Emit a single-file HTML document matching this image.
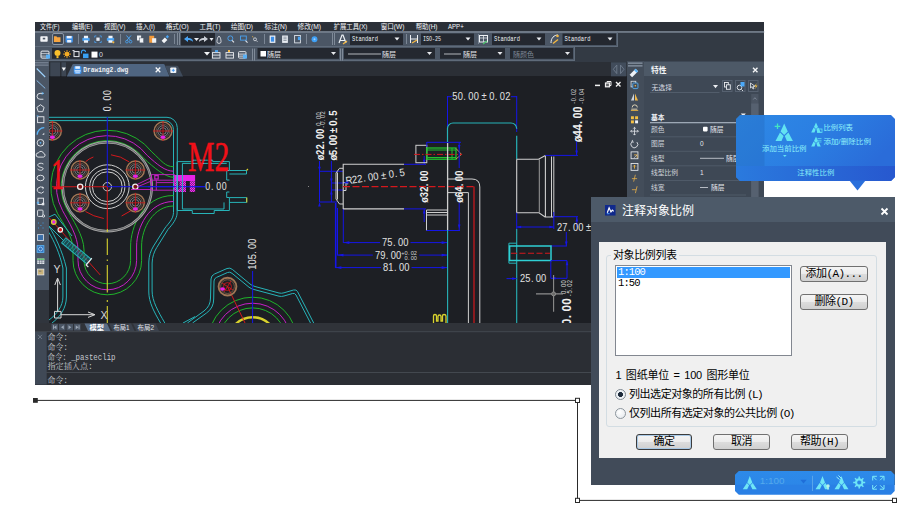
<!DOCTYPE html>
<html lang="zh-CN">
<head>
<meta charset="utf-8">
<title>注释对象比例</title>
<style>
html,body{margin:0;padding:0;background:#fff;}
body{width:921px;height:528px;position:relative;overflow:hidden;font-family:"Liberation Sans","Noto Sans CJK SC",sans-serif;}
.abs{position:absolute;}
#win{position:absolute;left:35px;top:22px;width:729.200px;height:362.600px;background:#333a44;overflow:hidden;}
#menubar{position:absolute;left:0;top:0;width:730px;height:8.500px;background:#2b3038;color:#e8eaee;font-size:7px;line-height:9px;white-space:nowrap;}
#menubar span{position:absolute;top:0;}
#tb1{position:absolute;left:0;top:10px;width:583px;height:14px;background:#4b5665;}
#tb2{position:absolute;left:0;top:24px;width:539px;height:14px;background:#4b5665;}
.combo{position:absolute;height:11px;background:#23272e;color:#e4e6ea;font-size:6px;line-height:11px;white-space:nowrap;}
.combo i{position:absolute;right:3px;top:4px;width:0;height:0;border-left:2.5px solid transparent;border-right:2.5px solid transparent;border-top:3px solid #e8eaee;}
.sep{position:absolute;width:1px;background:#7a8593;}
.grip{position:absolute;width:2px;border-left:1px solid #808a98;border-right:1px solid #808a98;}
#tabbar{position:absolute;left:14px;top:40px;width:578px;height:14.500px;background:#2b2f36;}
#ltool{position:absolute;left:0;top:39px;width:14px;height:229px;background:#4b5665;}
#lbelow{position:absolute;left:0;top:268px;width:14px;height:40px;background:#30353d;}
#canvas{position:absolute;left:14px;top:54px;width:578px;height:247px;background:#1d1f24;overflow:hidden;}
#laytabs{position:absolute;left:0;top:301px;width:592px;height:9px;background:#303339;}
#cmd{position:absolute;left:0;top:310px;width:592px;height:53px;background:#2b2e34;}
#rstrip{position:absolute;left:592px;top:39px;width:17px;height:323px;background:#434d5a;}
#props{position:absolute;left:609px;top:39px;width:121px;height:323px;background:#3e4855;}
#props .hd{position:absolute;left:0;top:.500px;width:121px;height:14.500px;background:#4d5967;}
.ptxt{position:absolute;color:#e2e5ea;font-size:7px;line-height:9px;white-space:nowrap;}
.prow{position:absolute;left:5px;width:100px;height:1px;background:#4d5764;}
#dlg{position:absolute;left:591px;top:196.700px;width:303.700px;height:288.200px;background:#414b59;}
#dlg .tt{position:absolute;left:0;top:0;width:304px;height:25px;background:#4d5a69;}
#dlg .pn{position:absolute;left:8px;top:45px;width:287.300px;height:216px;background:#f0f0f0;}
.btn{position:absolute;height:14px;border:1px solid #707070;border-radius:3px;background:linear-gradient(#f4f4f4 0%,#ececec 48%,#dcdcdc 52%,#d0d0d0 100%);color:#000;font-size:11px;line-height:15px;text-align:center;white-space:nowrap;box-sizing:content-box;font-family:"Liberation Mono","Noto Sans CJK SC",monospace;letter-spacing:-.6px;}
.dt{position:absolute;color:#000;font-size:11px;line-height:13px;white-space:nowrap;}
</style>
</head>
<body>
<!-- ================= MAIN WINDOW ================= -->
<div id="win">
  <div id="menubar"></div>
  <div id="tb1"></div>
  <div id="tb2"></div>
  <div id="ltool"></div>
  <div id="lbelow"></div>
  <div id="tabbar"></div>
  <div id="canvas"><!--CANVAS--></div>
  <div id="laytabs"></div>
  <div id="cmd"></div>
  <div id="rstrip"></div>
  <div id="props"><div class="hd"></div></div>
</div>

<!-- ================= TOOLBAR ICONS (page coords) ================= -->
<svg class="abs" style="left:0;top:0" width="921" height="528" viewBox="0 0 921 528" font-family="'Liberation Mono','Noto Sans CJK SC',monospace">
  <!-- borders / lines -->
  <rect x="35" y="31.200" width="729.200" height="1.500" fill="#7d8896"/>
  <rect x="35" y="46" width="583" height="1" fill="#5f6b7a"/>
  <rect x="617" y="32" width="1" height="15" fill="#5f6b7a"/>
  <rect x="574" y="47" width="1" height="13" fill="#5f6b7a"/>
  <rect x="35" y="59.800" width="540" height="1.200" fill="#5f6b7a"/>
  <!-- toolbar 1 icons -->
  <g>
    <g transform="translate(44 39) scale(.82) translate(-44.5 -38.5)"><rect x="40" y="35" width="9" height="7" rx="1" fill="#f2f4f7"/><rect x="43" y="37" width="3" height="2" fill="#4b5665"/></g>
    <rect x="52.5" y="33.500" width="11" height="11" rx="1.5" fill="#3c4552" stroke="#8c97a6" stroke-width="1"/>
    <g transform="translate(57.2 39.2) scale(.82) translate(-58 -39.5)"><path d="M54 36h3l1 1h4v6h-8z" fill="#f7a540"/></g>
    <g transform="translate(69.2 39.2) scale(.82) translate(-70 -39)"><rect x="65.500" y="35" width="9" height="8" rx="1" fill="#3b8ee8"/><rect x="67" y="35" width="6" height="3" fill="#e9f2ff"/><rect x="67.500" y="40" width="5" height="3" fill="#e9f2ff"/></g>
    <rect x="78" y="34" width="1" height="10" fill="#7b8695"/>
    <g transform="translate(86 39.2) scale(.82) translate(-86 -38.7)"><rect x="81.500" y="37" width="9" height="4" rx="1" fill="#49a0f0"/><rect x="83.500" y="34.500" width="5" height="3" fill="#eef4fb"/><rect x="83.500" y="40" width="5" height="3" fill="#eef4fb"/></g>
    <g transform="translate(98 39.2) scale(.82) translate(-98 -39)"><path d="M94 35h2M94 35v2M102 35h-2M102 35v2M94 43h2M94 43v-2M102 43h-2M102 43v-2" stroke="#49a0f0" stroke-width="1" fill="none"/><rect x="96" y="37" width="4" height="4" fill="#e8eef6"/></g>
    <g transform="translate(110.5 39.2) scale(.82) translate(-110.5 -38.7)"><rect x="106" y="37" width="9" height="4" rx="1" fill="#49a0f0"/><rect x="108" y="34.500" width="5" height="3" fill="#eef4fb"/><rect x="108" y="40" width="5" height="3" fill="#eef4fb"/><circle cx="114" cy="42.500" r="1.300" fill="#f5b841"/></g>
    <rect x="120" y="34" width="1" height="10" fill="#7b8695"/>
    <g transform="translate(128.7 39.2) scale(.82) translate(-128.7 -39)"><path d="M126 34.500l5 6M131.500 34.500l-5 6" stroke="#4aa3f2" stroke-width="1.200" fill="none"/><circle cx="126.500" cy="42" r="1.600" fill="none" stroke="#4aa3f2"/><circle cx="131" cy="42" r="1.600" fill="none" stroke="#4aa3f2"/></g>
    <g transform="translate(140.3 39.2) scale(.82) translate(-140.5 -39)"><rect x="136.500" y="34.500" width="5" height="6" fill="#f0f3f7"/><rect x="139.500" y="37.500" width="5" height="6" fill="#f0f3f7" stroke="#4b5665" stroke-width=".6"/></g>
    <g transform="translate(152.7 39.2) scale(.82) translate(-152.7 -39.2)"><rect x="148.500" y="35" width="6" height="8.500" fill="#f39a3a"/><rect x="152" y="38" width="5" height="5.500" fill="#f0f3f7"/></g>
    <g transform="translate(165.3 39.2) scale(.82) translate(-165.5 -39)"><path d="M161 41l4-4 3 3-4 4z" fill="#f3f5f8"/><path d="M166 36l2-2 2 2-2 2z" fill="#4aa3f2"/></g>
    <rect x="174" y="34" width="1" height="10" fill="#7b8695"/>
    <rect x="177" y="33" width="1" height="12" fill="#7f8a98"/><rect x="179" y="33" width="1" height="12" fill="#7f8a98"/>
    <rect x="181" y="33" width="34" height="12.500" fill="#242830"/>
    <path d="M184 39l4-3v2c3 0 5 1 5 4-1-1.600-3-2-5-2v2z" fill="#4aa3f2"/>
    <path d="M194 38h5l-2.500 3z" fill="#e8ebf0"/>
    <path d="M207 39l-4-3v2c-3 0-5 1-5 4 1-1.600 3-2 5-2v2z" fill="#c9ced6" transform="translate(1 0)"/>
    <path d="M209.500 38h4l-2 3z" fill="#e8ebf0"/>
    <g transform="translate(219 39.3) scale(.82) translate(-219 -39)"><path d="M216.500 42c0-3 1-6 2.500-7 1.500 1 2.500 4 2.500 7a2.500 2 0 0 1-5 0z" fill="none" stroke="#e6e9ee" stroke-width="1"/></g>
    <g transform="translate(231.3 39.3) scale(.82) translate(-231.2 -39.2)"><circle cx="230" cy="38" r="3" fill="none" stroke="#4aa3f2" stroke-width="1.100"/><path d="M232 40.500l2.500 2.500" stroke="#e6e9ee" stroke-width="1.300"/></g>
    <g transform="translate(244 39.3) scale(.82) translate(-244.2 -39)"><rect x="240" y="35" width="7" height="5" fill="none" stroke="#4aa3f2" stroke-width="1.100"/><path d="M246 40.500l2.500 2.500" stroke="#e6e9ee" stroke-width="1.300"/></g>
    <g transform="translate(255 39.3) scale(.82) translate(-254.5 -39.5)"><circle cx="254.500" cy="39.500" r="1.800" fill="none" stroke="#e6e9ee" stroke-width=".9"/><path d="M256 41l1.500 1.500" stroke="#e6e9ee"/><path d="M251 36l1.500 1" stroke="#f5b841"/></g>
    <rect x="264" y="34" width="1" height="10" fill="#7b8695"/>
    <g transform="translate(272.5 39.2) scale(.82) translate(-272.5 -39)"><rect x="269" y="34.500" width="7" height="9" fill="#e9edf3"/><rect x="270.500" y="36" width="4" height="6" fill="#3b8ee8"/></g>
    <g transform="translate(285 39.2) scale(.82) translate(-285 -39)"><rect x="281.500" y="34.500" width="7" height="9" fill="#e9edf3"/><path d="M283 36.500h4M283 38.500h4M283 40.500h4" stroke="#5a6675" stroke-width=".8"/></g>
    <g transform="translate(297.5 39.2) scale(.82) translate(-297.5 -39)"><rect x="294" y="34.500" width="7" height="9" fill="none" stroke="#e9edf3" stroke-width="1"/><rect x="298" y="36" width="3" height="4" fill="#4aa3f2"/></g>
    <rect x="306" y="34" width="1" height="10" fill="#7b8695"/>
    <g transform="translate(314.5 39.2) scale(.82) translate(-314.5 -39)"><circle cx="314.500" cy="39" r="3.600" fill="#3fa0f5"/><circle cx="314.500" cy="39" r="1.200" fill="#9fd0ff"/></g>
    <rect x="332" y="33" width="1" height="12" fill="#7f8a98"/><rect x="334" y="33" width="1" height="12" fill="#7f8a98"/>
    <path d="M339 43l3-8h1l3 8M340.200 40.500h4.600" stroke="#eef1f5" stroke-width="1.200" fill="none"/><path d="M343 44l4-3" stroke="#f5b841" stroke-width="1.300"/>
    <rect x="406" y="34" width="1" height="10" fill="#7b8695"/>
    <path d="M410.500 35v8M417.500 35v8M410.500 39h7" stroke="#eef1f5" stroke-width="1" fill="none"/><path d="M412 43l5-3" stroke="#f5b841" stroke-width="1.300"/>
    <rect x="478" y="34" width="1" height="10" fill="#7b8695"/>
    <rect x="479.500" y="35.500" width="8" height="6.500" fill="none" stroke="#eef1f5" stroke-width="1"/><path d="M479.500 38h8M483.500 35.500v6.500" stroke="#eef1f5" stroke-width=".7"/><path d="M483 44l4-3" stroke="#49c16a" stroke-width="1.300"/>
    <path d="M551 43c0-5 3-8 7-8" stroke="#eef1f5" stroke-width="1" fill="none"/><path d="M553 43.500l5-4" stroke="#f5b841" stroke-width="1.400"/><circle cx="557.500" cy="36" r="1.300" fill="#f5b841"/>
  </g>
  <!-- combos row 1 -->
  <g font-size="6.300" fill="#eef0f4">
    <rect x="350" y="33.500" width="53" height="11.500" fill="#242830"/><text x="352" y="41.200" textLength="26" lengthAdjust="spacingAndGlyphs">Standard</text><path d="M394.500 37.500h5l-2.500 3z"/>
    <rect x="421" y="33.500" width="53" height="11.500" fill="#242830"/><text x="423" y="41.200" textLength="18" lengthAdjust="spacingAndGlyphs">ISO-25</text><path d="M465.500 37.500h5l-2.500 3z"/>
    <rect x="492" y="33.500" width="53" height="11.500" fill="#242830"/><text x="494" y="41.200" textLength="26" lengthAdjust="spacingAndGlyphs">Standard</text><path d="M536.500 37.500h5l-2.500 3z"/>
    <rect x="562.500" y="33.500" width="53.500" height="11.500" fill="#242830"/><text x="564.500" y="41.200" textLength="26" lengthAdjust="spacingAndGlyphs">Standard</text><path d="M607.500 37.500h5l-2.500 3z"/>
  </g>
  <!-- toolbar 2 -->
  <g transform="translate(0 .600)">
    <rect x="41" y="50.500" width="8" height="7" rx="1" fill="none" stroke="#e8ebf0" stroke-width="1"/><path d="M41 53h8M41 55.500h8" stroke="#e8ebf0" stroke-width=".7"/><rect x="46" y="54" width="4" height="4" fill="#5ab0f5"/>
    <rect x="52" y="47.400" width="159.500" height="10.800" fill="#242830"/>
    <circle cx="57.500" cy="52.500" r="3" fill="#f8bf2c"/><rect x="56.500" y="55.500" width="2" height="2" fill="#f8bf2c"/>
    <circle cx="67" cy="53.500" r="2.200" fill="#f8bf2c"/><path d="M67 49.500v8M63 53.500h8M64.200 50.700l5.600 5.600M69.800 50.700l-5.600 5.600" stroke="#f5a623" stroke-width=".9"/>
    <rect x="74" y="51" width="5" height="5" fill="none" stroke="#e8ebf0" stroke-width="1"/><path d="M72.500 50h2" stroke="#e8ebf0"/>
    <rect x="83" y="53" width="5.500" height="4.500" fill="#39a1f4"/><path d="M81.500 53v-1.500a2 2 0 0 1 4 0" stroke="#39a1f4" stroke-width="1.100" fill="none"/>
    <rect x="91.500" y="51" width="6" height="6" fill="#fff"/>
    <text x="99" y="56" font-size="7" fill="#d8dce2" font-family="'Liberation Sans',sans-serif">0</text>
    <path d="M204 51.500h6l-3 3.500z" fill="#f2f4f7"/>
    <g fill="none" stroke="#e8ebf0" stroke-width=".9"><rect x="212.500" y="52" width="7.500" height="5.500"/><path d="M212.500 54.500h7.500"/><rect x="226" y="52" width="7.500" height="5.500"/><path d="M226 54.500h7.500"/><rect x="238.500" y="51" width="7.500" height="6.500" rx="1"/><path d="M238.500 53.500h7.500M238.500 55.500h7.500"/></g>
    <path d="M215 49.500h3v2h-3z" fill="#4aa3f2"/><path d="M228 49.500h2v2h-2z" fill="#f5b841"/><rect x="243" y="54" width="4" height="4" fill="#5ab0f5"/>
    <rect x="252" y="48" width="1" height="12" fill="#7f8a98"/><rect x="254" y="48" width="1" height="12" fill="#7f8a98"/>
    <rect x="340" y="48" width="1" height="12" fill="#7f8a98"/><rect x="342" y="48" width="1" height="12" fill="#7f8a98"/>
  </g>
  <g font-size="7" fill="#e6e8ec" font-family="'Liberation Sans','Noto Sans CJK SC',sans-serif">
    <rect x="257.500" y="48" width="81.500" height="10.800" fill="#242830"/><rect x="260.500" y="51" width="5.500" height="5.500" fill="#fff"/><text x="267" y="56.500">随层</text><path d="M331 52h5l-2.500 3z"/>
    <rect x="344" y="48" width="91" height="10.800" fill="#242830"/><path d="M348 54h33" stroke="#d8dbe0" stroke-width=".8"/><text x="382" y="56.500">随层</text><path d="M427 52h5l-2.500 3z"/>
    <rect x="440" y="48" width="65" height="10.800" fill="#242830"/><path d="M444 54h17" stroke="#d8dbe0" stroke-width=".8"/><text x="463" y="56.500">随层</text><path d="M497.500 52h5l-2.500 3z"/>
    <rect x="510" y="48" width="63" height="10.800" fill="#242830"/><text x="513" y="56.500" fill="#7f8996">随颜色</text><path d="M565 52h5l-2.500 3z"/>
  </g>
</svg>
<!-- ================= CAD CANVAS (page coords) ================= -->
<svg class="abs" style="left:49px;top:76px" width="578" height="247" viewBox="49 76 578 247" fill="none" stroke-linecap="butt" font-family="'Liberation Serif','Noto Serif CJK SC',serif">
<path d="M49 117.3H167A10.3 10.3 0 0 1 177.3 127.6V161.5" stroke="#27b3b8" stroke-width="1" />
<path d="M49 120.6H164.5A9 9 0 0 1 173.5 129.6V212.500C173.500 219 168 224 165 228L153.600 246C150.500 251 149 256 148.800 262V292C148.800 302 154 312 160.600 323" stroke="#27b3b8" stroke-width="1" />
<path d="M177.100 210.500V213C177 219 172 225 168 229.400L156.700 247.600C154 252 152.300 257 152.100 263V291C152.100 301 158 311 164.800 323" stroke="#27b3b8" stroke-width="1" />
<path d="M49 226.4C55 236 62 250 66.4 268V297C66.4 308 60 317 52 323" stroke="#27b3b8" stroke-width="1" />
<path d="M49 232.5C54 241 60 254 62.9 268V297C62.9 306 57 314 49 320" stroke="#27b3b8" stroke-width="1" />
<path d="M195 316.6L183 323" stroke="#27b3b8" stroke-width="1" />
<path d="M173.5 166.7C165 166.7 161.8 160.9 151.8 151.9A56.5 56.5 0 0 0 57.4 213.2C63.4 224.2 73 236 73 250V260.5A34.3 34.3 0 0 0 141.6 260.5V246C141.6 228 153.6 206 173.5 206" stroke="#1fb32a" stroke-width="1" />
<path d="M173.5 171.2C165 171.2 157.3 164.5 147.3 155.5A50.7 50.7 0 0 0 62.5 210.5C68.5 221.5 78 236 78 250V260.5A29.3 29.3 0 0 0 136.6 260.5V246C136.6 228 148.6 201.5 173.5 201.5" stroke="#c61fc6" stroke-width="1" />
<path d="M173.5 177.3C165 177.3 153.7 167.3 143.7 158.3A46.2 46.2 0 0 0 66.5 208.4C72.5 219.4 84 236 84 250V260.5A23.3 23.3 0 0 0 130.6 260.5V246C130.6 228 142.6 195.5 173.5 195.5" stroke="#1fb32a" stroke-width="1" />
<circle cx="107.3" cy="186.7" r="44.5" stroke="#a8a8a8" stroke-width="2.4" fill="none"/>
<circle cx="107.3" cy="186.7" r="44.5" stroke="#1d1f24" stroke-width="0.5" fill="none"/>
<circle cx="107.3" cy="186.7" r="21.9" stroke="#cfcfcf" stroke-width="1" fill="none"/>
<circle cx="107.3" cy="186.7" r="17.6" stroke="#cfcfcf" stroke-width="1" fill="none"/>
<circle cx="107.3" cy="186.7" r="14.9" stroke="#cfcfcf" stroke-width="1" fill="none"/>
<circle cx="107.3" cy="186.7" r="4.2" stroke="#cfcfcf" stroke-width="1" fill="none"/>
<path d="M93.4 157Q89 158.500 85.500 161.800" stroke="#d4181c" stroke-width="1" />
<path d="M111 154.800Q121 156 129 161.800" stroke="#d4181c" stroke-width="1" />
<path d="M85.500 211.500Q93 216.500 103.800 218.500" stroke="#d4181c" stroke-width="1" />
<path d="M132.500 209.800L121.600 216" stroke="#d4181c" stroke-width="1" />
<circle cx="80" cy="170" r="8.9" stroke="#a07655" stroke-width="1.5" fill="none"/>
<circle cx="80" cy="170" r="6.9" stroke="#7b5f49" stroke-width="0.7" fill="none"/>
<circle cx="80" cy="170" r="5.3" stroke="#a4a4a4" stroke-width="0.7" fill="none"/>
<circle cx="80" cy="170" r="3.3" stroke="#a4a4a4" stroke-width="0.7" fill="none"/>
<path d="M70 170L90 170" stroke="#c81a1e" stroke-width="0.9" />
<path d="M80 160L80 180" stroke="#c81a1e" stroke-width="0.9" />
<ellipse cx="80" cy="176.2" rx="2.6" ry="1.8" fill="#e522e5" stroke="none"/>
<circle cx="135.4" cy="170" r="8.9" stroke="#a07655" stroke-width="1.5" fill="none"/>
<circle cx="135.4" cy="170" r="6.9" stroke="#7b5f49" stroke-width="0.7" fill="none"/>
<circle cx="135.4" cy="170" r="5.3" stroke="#a4a4a4" stroke-width="0.7" fill="none"/>
<circle cx="135.4" cy="170" r="3.3" stroke="#a4a4a4" stroke-width="0.7" fill="none"/>
<path d="M125.4 170L145.4 170" stroke="#c81a1e" stroke-width="0.9" />
<path d="M135.4 160L135.4 180" stroke="#c81a1e" stroke-width="0.9" />
<ellipse cx="135.4" cy="176.2" rx="2.6" ry="1.8" fill="#e522e5" stroke="none"/>
<circle cx="80" cy="202.8" r="8.9" stroke="#a07655" stroke-width="1.5" fill="none"/>
<circle cx="80" cy="202.8" r="6.9" stroke="#7b5f49" stroke-width="0.7" fill="none"/>
<circle cx="80" cy="202.8" r="5.3" stroke="#a4a4a4" stroke-width="0.7" fill="none"/>
<circle cx="80" cy="202.8" r="3.3" stroke="#a4a4a4" stroke-width="0.7" fill="none"/>
<path d="M70 202.8L90 202.8" stroke="#c81a1e" stroke-width="0.9" />
<path d="M80 192.8L80 212.8" stroke="#c81a1e" stroke-width="0.9" />
<ellipse cx="80" cy="209" rx="2.6" ry="1.8" fill="#e522e5" stroke="none"/>
<circle cx="135.4" cy="202.8" r="8.9" stroke="#a07655" stroke-width="1.5" fill="none"/>
<circle cx="135.4" cy="202.8" r="6.9" stroke="#7b5f49" stroke-width="0.7" fill="none"/>
<circle cx="135.4" cy="202.8" r="5.3" stroke="#a4a4a4" stroke-width="0.7" fill="none"/>
<circle cx="135.4" cy="202.8" r="3.3" stroke="#a4a4a4" stroke-width="0.7" fill="none"/>
<path d="M125.4 202.8L145.4 202.8" stroke="#c81a1e" stroke-width="0.9" />
<path d="M135.4 192.8L135.4 212.8" stroke="#c81a1e" stroke-width="0.9" />
<ellipse cx="135.4" cy="209" rx="2.6" ry="1.8" fill="#e522e5" stroke="none"/>
<circle cx="52.4" cy="131" r="8.9" stroke="#a07655" stroke-width="1.5" fill="none"/>
<circle cx="52.4" cy="131" r="6.9" stroke="#7b5f49" stroke-width="0.7" fill="none"/>
<circle cx="52.4" cy="131" r="5.3" stroke="#a4a4a4" stroke-width="0.7" fill="none"/>
<circle cx="52.4" cy="131" r="3.3" stroke="#a4a4a4" stroke-width="0.7" fill="none"/>
<path d="M42.4 131L62.4 131" stroke="#c81a1e" stroke-width="0.9" />
<path d="M52.4 121L52.4 141" stroke="#c81a1e" stroke-width="0.9" />
<ellipse cx="52.4" cy="137.2" rx="2.6" ry="1.8" fill="#e522e5" stroke="none"/>
<circle cx="163" cy="131" r="8.9" stroke="#a07655" stroke-width="1.5" fill="none"/>
<circle cx="163" cy="131" r="6.9" stroke="#7b5f49" stroke-width="0.7" fill="none"/>
<circle cx="163" cy="131" r="5.3" stroke="#a4a4a4" stroke-width="0.7" fill="none"/>
<circle cx="163" cy="131" r="3.3" stroke="#a4a4a4" stroke-width="0.7" fill="none"/>
<path d="M153 131L173 131" stroke="#c81a1e" stroke-width="0.9" />
<path d="M163 121L163 141" stroke="#c81a1e" stroke-width="0.9" />
<ellipse cx="163" cy="137.2" rx="2.6" ry="1.8" fill="#e522e5" stroke="none"/>
<path d="M107.3 117L107.3 186.7" stroke="#1515e8" stroke-width="1" />
<path d="M107.3 186.7L107.3 229" stroke="#d4181c" stroke-width="1.1" />
<path d="M107.300 229V232M107.300 238.500V255M107.300 259.500V261M107.300 265V292.500M107.300 300V302M107.300 306V323" stroke="#d8d22e" stroke-width="1.1" />
<path d="M52 186.7L107.3 186.7" stroke="#d4181c" stroke-width="1.1" />
<path d="M107.3 186.7L205 186.7" stroke="#1515e8" stroke-width="1" />
<circle cx="80.2" cy="186.7" r="2.6" stroke="#f0f0f0" stroke-width="1.3" fill="#7a1515"/>
<circle cx="135.3" cy="186.7" r="2.6" stroke="#f0f0f0" stroke-width="1.3" fill="#7a1515"/>
<path d="M151.400 174.600H174.500V190.200H151.400zM151.400 180.200H174.500M156.300 182.600H174.500M156.300 180.200V190.200" stroke="#c61fc6" stroke-width="0.9" />
<path d="M137 184.500L151.400 177.500M137 187L151.400 181" stroke="#c61fc6" stroke-width="0.9" />
<path d="M131 189.500H151.400" stroke="#c61fc6" stroke-width="0.9" />
<rect x="154.800" y="175.600" width="3.400" height="3.400" stroke="#c61fc6" stroke-width="1.200"/>
<defs><pattern id="mgp" width="2" height="2" patternUnits="userSpaceOnUse"><rect width="2" height="2" fill="#e21fe2" fill-opacity=".55"/><rect width="1" height="1" fill="#f02ff0"/><rect x="1" y="1" width="1" height="1" fill="#f02ff0"/></pattern></defs>
<rect x="174.600" y="175" width="20.500" height="6.300" fill="#e622e6" stroke="none"/>
<rect x="174.600" y="181.300" width="20.500" height="10.700" fill="url(#mgp)" stroke="none"/>
<rect x="186" y="181" width="3.800" height="11.300" fill="#1d1f24" stroke="none"/>
<rect x="177.200" y="181.500" width="2.400" height="7.800" fill="#1d1f24" stroke="none" opacity=".75"/>
<path d="M148 186.7L205 186.7" stroke="#1515e8" stroke-width="1" />
<path d="M177.300 161.600H192.700V160.200H212.700V161.600H229.400V170.500H226.700V180H229.400M229.400 192H226.700V197.500H229.400V210.500H214.200V213.500H192.300V210.500H177.100" stroke="#27b3b8" stroke-width="1" />
<path d="M182.400 163.400H226.700M182.400 163.400V209H224V202.400" stroke="#27b3b8" stroke-width="1" />
<path d="M177.200 161.600V210.500" stroke="#2fc3c9" stroke-width="1.4" />
<path d="M229.400 170.500H246.500V174H229.400M229.400 197.600H246.500V202.400H229.400" stroke="#27b3b8" stroke-width="1" />
<path d="M246.500 170.500l1.500-1.500M246.800 197.600v4.800" stroke="#d8d22e" stroke-width="1.1" />
<path d="M49 217L55 214.200L72 236M49 226L64 241" stroke="#27b3b8" stroke-width="1" />
<path d="M49 217.5L100.3 275" stroke="#d4181c" stroke-width="1" />
<circle cx="53.8" cy="222" r="2.3" stroke="#d8d22e" stroke-width="1.2" fill="#e522e5"/>
<circle cx="60.3" cy="229.8" r="2.3" stroke="#f0f0f0" stroke-width="1.1" fill="#e0141a"/>
<g transform="rotate(40 64 240)"><rect x="64" y="237.200" width="33" height="6.500" stroke="#27b3b8" fill="#1b6f78" fill-opacity=".55"/><path d="M66 237v7M69 237v7M72 237v7M75 237v7M78 237v7M81 237v7M84 237v7M87 237v7M90 237v7M93 237v7" stroke="#27b3b8" stroke-width=".6"/><path d="M97 236v9h3" stroke="#e8e8e8" stroke-width="1.200"/></g>
<text x="0" y="0" font-size="43.500" fill="#f01018" stroke="#f01018" stroke-width=".7" transform="translate(51.300 189.400) scale(.6 1)">1</text>
<text x="0" y="0" font-size="42.500" fill="#f01018" stroke="#f01018" stroke-width=".5" transform="translate(188 170.600) scale(.70 1)">M2</text>
<text x="0.3 6.7 12.8 19.1" y="0" font-size="10" fill="#e2e2e2" stroke="none" font-family="'Liberation Sans','Noto Sans CJK SC',sans-serif" transform="translate(205 190) scale(0.88 1)">0.00</text>
<text x="0.3 6.6 12.7 18.9" y="0" font-size="10" fill="#e2e2e2" stroke="none" font-family="'Liberation Sans','Noto Sans CJK SC',sans-serif" transform="translate(110.8 111.6) rotate(-90) scale(0.88 1)">0.00</text>
<path d="M57.600 311.400V279M54.500 311.400H61V318H54.500zM61 314.700H94" stroke="#d8d8d8" stroke-width="1" />
<path d="M54.800 285L57.600 278L60.400 285M88 312L95 314.700L88 317.400" stroke="#d8d8d8" stroke-width="1" />
<text x="53.5" y="272.5" font-size="10.5" fill="#d8d8d8" stroke="none" font-family="'Liberation Sans',sans-serif" >Y</text>
<text x="100.5" y="318.5" font-size="10.5" fill="#d8d8d8" stroke="none" font-family="'Liberation Sans',sans-serif" >X</text>
<path d="M187.400 323L204 311Q210.500 306 210.500 298L211 279Q211.200 275.500 214.500 274L227 268.500Q230 267.300 232.500 269.500L250 284Q252 285.700 255 286.500L279 293Q281.500 293.600 284 292.800L293.500 290Q296.300 289.200 297.600 291.700L313.700 323" stroke="#27b3b8" stroke-width="1" />
<path d="M192.500 323L206.500 313Q213.700 308 213.700 299L214 281Q214 278.500 216.500 277.400L227.500 272.500Q229.800 271.500 232 273.300L249 287.200Q251 288.700 254 289.500L279 296.200Q281.500 296.800 284 296L292.500 293.500Q294.800 292.800 296 295L310.500 323" stroke="#27b3b8" stroke-width="1" />
<circle cx="252.6" cy="341.5" r="44.3" stroke="#1fb32a" stroke-width="1" fill="none"/>
<circle cx="252.6" cy="341.5" r="38.3" stroke="#c61fc6" stroke-width="1" fill="none"/>
<circle cx="252.6" cy="341.5" r="33.6" stroke="#1fb32a" stroke-width="1" fill="none"/>
<circle cx="252.6" cy="341.5" r="24.3" stroke="#d8d22e" stroke-width="2.4" fill="none"/>
<path d="M227.5 286.6L245 323" stroke="#d4181c" stroke-width="1" />
<circle cx="227.5" cy="286.6" r="8.9" stroke="#a07655" stroke-width="1.9" fill="none"/>
<circle cx="227.5" cy="286.6" r="6.9" stroke="#84644b" stroke-width="0.8" fill="none"/>
<circle cx="227.5" cy="286.6" r="4" stroke="#d4181c" stroke-width="0.8" fill="none"/>
<path d="M222 283L233 290M231 281L224 292" stroke="#d4181c" stroke-width="0.9" />
<ellipse cx="222.500" cy="289" rx="2.400" ry="1.800" fill="#e522e5" stroke="none"/>
<path d="M252.6 271L252.6 323" stroke="#1515e8" stroke-width="1" />
<text x="0 6.5 13 19.9 25.9 32.3" y="0" font-size="11.5" fill="#e2e2e2" stroke="none" font-family="'Liberation Sans','Noto Sans CJK SC',sans-serif" transform="translate(256 269.7) rotate(-90) scale(0.8 1)">105.00</text>
<text x="-0.2 6.1 12.1 18.4 24 29.9" y="0" font-size="10.3" fill="#f0f0f0" stroke="none" font-family="'Liberation Sans','Noto Sans CJK SC',sans-serif" transform="translate(324.2 160) rotate(-90) scale(0.88 1)" font-weight="bold">ø22.00</text>
<text x="0.2 4.3 7.9 11.8" y="0" font-size="6.4" fill="#d6d6d6" stroke="none" font-family="'Liberation Sans','Noto Sans CJK SC',sans-serif" transform="translate(320.6 126) rotate(-90) scale(0.9 1)">0.00</text>
<text x="0.9 4.1 8.2 11.8 15.7" y="0" font-size="6.4" fill="#d6d6d6" stroke="none" font-family="'Liberation Sans','Noto Sans CJK SC',sans-serif" transform="translate(325.4 128.5) rotate(-90) scale(0.9 1)">-0.02</text>
<text x="-0.5 5.5 11.8 16.9 22.6 30.8 39 45.3 50.4" y="0" font-size="10.8" fill="#f0f0f0" stroke="none" font-family="'Liberation Sans','Noto Sans CJK SC',sans-serif" transform="translate(336.7 160) rotate(-90) scale(0.88 1)" font-weight="bold">ø5.00±0.5</text>
<path d="M319.5 161L319.5 202" stroke="#1515e8" stroke-width="1" />
<path d="M331.4 161L331.4 202" stroke="#1515e8" stroke-width="1" />
<path d="M319.5 171.3L343 171.3" stroke="#1515e8" stroke-width="1" />
<path d="M319.5 202L337 202" stroke="#1515e8" stroke-width="1" />
<path d="M331.4 183L345 183" stroke="#1515e8" stroke-width="1" />
<path d="M331.4 190L343 190" stroke="#1515e8" stroke-width="1" />
<path d="M319.5 171.3L318.2 166.8L320.8 166.8z" fill="#1515e8" stroke="none"/>
<path d="M319.5 202L318.2 206.5L320.8 206.5z" fill="#1515e8" stroke="none"/>
<path d="M331.4 183L330.1 178.5L332.7 178.5z" fill="#1515e8" stroke="none"/>
<path d="M331.4 190L330.1 194.5L332.7 194.5z" fill="#1515e8" stroke="none"/>
<path d="M335.7 203L335.7 268" stroke="#1515e8" stroke-width="1.6" />
<path d="M337.5 208L337.5 255.5" stroke="#1515e8" stroke-width="1" />
<path d="M343.3 209L343.3 243" stroke="#1515e8" stroke-width="1" />
<path d="M343.200 168.300H339.500L336 173V199L339.500 204H343.200M337.500 172.500V199.500M343.200 182.500H346V190.500H343.200" stroke="#cfcfcf" stroke-width="1" />
<path d="M343.200 208.900V164.300H404M343.200 208.900H404" stroke="#cfcfcf" stroke-width="1.1" />
<path d="M404 164.3L426 164.3" stroke="#1515e8" stroke-width="1" />
<path d="M404 208.9L426 208.9" stroke="#1515e8" stroke-width="1" />
<path d="M343 186.6L474 186.6" stroke="#d4181c" stroke-width="1.1" stroke-dasharray="7 2.500"/>
<text x="-0.8 6.2 12.3 18.9 24.6 30.7 39.7 48.5 55.1 60.8" y="0" font-size="10.8" fill="#e2e2e2" stroke="none" font-family="'Liberation Sans','Noto Sans CJK SC',sans-serif" transform="translate(347 184.3) rotate(-8.5) scale(0.88 1)">R22.00±0.5</text>
<path d="M343.5 182.5L348.5 181.3L348.5 183.7z" fill="#1515e8" stroke="none"/>
<text x="-0.2 6.1 12.2 18.6 24.3 30.4" y="0" font-size="10.6" fill="#f0f0f0" stroke="none" font-family="'Liberation Sans','Noto Sans CJK SC',sans-serif" transform="translate(428.3 202.5) rotate(-90) scale(0.88 1)" font-weight="bold">ø32.00</text>
<text x="-0.2 6.1 12.2 18.6 24.3 30.4" y="0" font-size="10.6" fill="#f0f0f0" stroke="none" font-family="'Liberation Sans','Noto Sans CJK SC',sans-serif" transform="translate(462.8 202.5) rotate(-90) scale(0.88 1)" font-weight="bold">ø64.00</text>
<path d="M424.2 156L424.2 164" stroke="#1515e8" stroke-width="1" />
<path d="M424.2 164.3L422.9 159.8L425.5 159.8z" fill="#1515e8" stroke="none"/>
<path d="M424.2 209L424.2 222" stroke="#1515e8" stroke-width="1" />
<path d="M424.2 209L422.9 213.5L425.5 213.5z" fill="#1515e8" stroke="none"/>
<rect x="415.900" y="145.300" width="10.900" height="17.400" stroke="#cfcfcf"/>
<rect x="426.800" y="148" width="29.200" height="11.200" stroke="#22c12e" stroke-width="1.300"/>
<path d="M452 148V159.200M427 150H456M427 157.500H456" stroke="#22c12e" stroke-width="1" />
<path d="M456 148.500L461.500 154.400L456 159" stroke="#c98a5e" stroke-width="1" />
<path d="M414 154.4L462 154.4" stroke="#d4181c" stroke-width="1" stroke-dasharray="6 2 1.500 2"/>
<path d="M426.8 142.3L461 142.3" stroke="#1515e8" stroke-width="1" />
<path d="M426.8 142L426.8 147" stroke="#1515e8" stroke-width="1" />
<path d="M459.2 142.3L459.2 168" stroke="#1515e8" stroke-width="1" />
<path d="M459.2 149.5L457.9 145L460.5 145z" fill="#1515e8" stroke="none"/>
<path d="M459.2 203L459.2 230.5" stroke="#1515e8" stroke-width="1" />
<path d="M459.2 229L457.9 224.5L460.5 224.5z" fill="#1515e8" stroke="none"/>
<path d="M447.6 143L447.6 230" stroke="#cfcfcf" stroke-width="1.3" />
<path d="M426.500 210H447M426.500 212.500H447M426.500 215H447M426.500 210V230.500" stroke="#cfcfcf" stroke-width="1" />
<path d="M426.5 230.5L460 230.5" stroke="#1515e8" stroke-width="1" />
<path d="M447.600 179H472Q479.800 179 479.800 187V323" stroke="#cfcfcf" stroke-width="1" />
<path d="M447.600 192.600H468.400V323" stroke="#cfcfcf" stroke-width="1" />
<path d="M474 186.600V323" stroke="#d4181c" stroke-width="1.2" />
<path d="M447.5 96.7L452 96.7" stroke="#1515e8" stroke-width="1" />
<path d="M511 96.7L516.7 96.7" stroke="#1515e8" stroke-width="1" />
<path d="M447.5 96L447.5 131" stroke="#1515e8" stroke-width="1" />
<path d="M516.7 96L516.7 132" stroke="#1515e8" stroke-width="1" />
<text x="0.1 6.2 12.6 18.3 24.4 33.2 42 48.4 54.1 60.2" y="0" font-size="10.6" fill="#e2e2e2" stroke="none" font-family="'Liberation Sans','Noto Sans CJK SC',sans-serif" transform="translate(452.2 100.3) scale(0.88 1)">50.00±0.02</text>
<path d="M447.500 142V128.500A5.500 5.500 0 0 1 453 123H511A5.700 5.700 0 0 1 516.700 128.700" stroke="#27b3b8" stroke-width="1.2" />
<path d="M516.7 135.7L516.7 159.2" stroke="#27b3b8" stroke-width="1.2" />
<path d="M516.700 159.200H538.500L545.400 155.400M516.700 159.200V212.700H539L545 217H553.800" stroke="#cfcfcf" stroke-width="1.1" />
<path d="M539.300 159.200V212.700" stroke="#9a9a9a" stroke-width="1" />
<path d="M545.400 155.400V217" stroke="#cfcfcf" stroke-width="1.1" />
<path d="M551.500 156.500V217M553.800 156.500V217" stroke="#cfcfcf" stroke-width="1" />
<path d="M545.4 155.4L578 155.4" stroke="#1515e8" stroke-width="1" />
<path d="M576.6 141.5L576.6 155.4" stroke="#1515e8" stroke-width="1" />
<path d="M576.6 155L575.3 150.5L577.9 150.5z" fill="#1515e8" stroke="none"/>
<text x="-0.4 7.1 14.3 22.1 28.7 35.9" y="0" font-size="13.2" fill="#f0f0f0" stroke="none" font-family="'Liberation Sans','Noto Sans CJK SC',sans-serif" transform="translate(582 142) rotate(-90) scale(0.82 1)" font-weight="bold">ø44.00</text>
<text x="0.9 4.3 9.2 12.9 17.2" y="0" font-size="7.8" fill="#d6d6d6" stroke="none" font-family="'Liberation Sans','Noto Sans CJK SC',sans-serif" transform="translate(576.4 104.3) rotate(-90) scale(0.72 1)">-0.02</text>
<text x="0.9 4.3 9.2 12.9 17.2" y="0" font-size="7.8" fill="#d6d6d6" stroke="none" font-family="'Liberation Sans','Noto Sans CJK SC',sans-serif" transform="translate(583.9 104.3) rotate(-90) scale(0.72 1)">-0.04</text>
<path d="M516.7 212.7L516.7 229" stroke="#1515e8" stroke-width="1" />
<path d="M553.8 212L553.8 229" stroke="#1515e8" stroke-width="1" />
<path d="M516.7 227L553.8 227" stroke="#1515e8" stroke-width="1" />
<path d="M516.7 227L521.2 225.7L521.2 228.3z" fill="#1515e8" stroke="none"/>
<path d="M553.8 227L549.3 225.7L549.3 228.3z" fill="#1515e8" stroke="none"/>
<path d="M554 216.7L578 216.7" stroke="#1515e8" stroke-width="1" />
<path d="M576.8 216.7L576.8 227" stroke="#1515e8" stroke-width="1" />
<path d="M576.8 217L575.5 221.5L578.1 221.5z" fill="#1515e8" stroke="none"/>
<text x="0.1 6.1 12.5 18.1 24.2 32.9" y="0" font-size="10.6" fill="#e2e2e2" stroke="none" font-family="'Liberation Sans','Noto Sans CJK SC',sans-serif" transform="translate(557 230.8) scale(0.88 1)">27.00±</text>
<path d="M566.3 232L566.3 246" stroke="#1515e8" stroke-width="1" />
<path d="M566.3 246L565 241.5L567.6 241.5z" fill="#1515e8" stroke="none"/>
<path d="M551 246L567 246" stroke="#1515e8" stroke-width="1" />
<path d="M516.7 229L516.7 323" stroke="#27b3b8" stroke-width="1.1" />
<path d="M508.900 243.200H516.700M508.900 243.200V263.200H516.700" stroke="#27b3b8" stroke-width="1" />
<rect x="509.600" y="246" width="41.400" height="14.500" stroke="#2fd0d4" stroke-width="1.500"/>
<path d="M511 253.2L550 253.2" stroke="#d4181c" stroke-width="1.1" stroke-dasharray="6 2.500"/>
<path d="M551 260.6L567 260.6" stroke="#1515e8" stroke-width="1" />
<path d="M567 260.6L567 278.3" stroke="#1515e8" stroke-width="1" />
<path d="M567 260.8L565.7 265.3L568.3 265.3z" fill="#1515e8" stroke="none"/>
<path d="M550.8 260.6L550.8 278.3" stroke="#1515e8" stroke-width="1" />
<path d="M550.8 278.3L567 278.3" stroke="#1515e8" stroke-width="1" />
<path d="M551 278.3L555.5 277L555.5 279.6z" fill="#1515e8" stroke="none"/>
<path d="M506.5 278.6L516.7 278.6" stroke="#1515e8" stroke-width="1" />
<path d="M516.7 278.6L512.2 277.3L512.2 279.9z" fill="#1515e8" stroke="none"/>
<text x="0 6 12.4 18 24" y="0" font-size="10.6" fill="#e2e2e2" stroke="none" font-family="'Liberation Sans','Noto Sans CJK SC',sans-serif" transform="translate(520 282.2) scale(0.88 1)">25.00</text>
<text x="0.2 8.1 15.5 23.2" y="0" font-size="13.2" fill="#f0f0f0" stroke="none" font-family="'Liberation Sans','Noto Sans CJK SC',sans-serif" transform="translate(571 325.5) rotate(-90) scale(0.9 1)" font-weight="bold">0.00</text>
<text x="0.1 4.3 7.9 11.8" y="0" font-size="6.6" fill="#d6d6d6" stroke="none" font-family="'Liberation Sans','Noto Sans CJK SC',sans-serif" transform="translate(565.6 294) rotate(-90) scale(0.9 1)">0.00</text>
<text x="0.8 3.8 8 11.4 15.2" y="0" font-size="6.6" fill="#d6d6d6" stroke="none" font-family="'Liberation Sans','Noto Sans CJK SC',sans-serif" transform="translate(571.7 297) rotate(-90) scale(0.9 1)">-5.02</text>
<path d="M536 293.900H563M553.600 275V311.700" stroke="#8d8d8d" stroke-width="1.1" />
<circle cx="553.6" cy="293.9" r="2" stroke="#8d8d8d" stroke-width="1" fill="#6a6a6a"/>
<path d="M343.4 242.6L380 242.6" stroke="#1515e8" stroke-width="1" />
<path d="M410.5 242.6L447.6 242.6" stroke="#1515e8" stroke-width="1" />
<path d="M343.4 242.6L349.4 241.2L349.4 244z" fill="#1515e8" stroke="none"/>
<path d="M447.6 242.6L441.6 241.2L441.6 244z" fill="#1515e8" stroke="none"/>
<text x="0.1 6.1 12.5 18.1 24.2" y="0" font-size="10.6" fill="#e2e2e2" stroke="none" font-family="'Liberation Sans','Noto Sans CJK SC',sans-serif" transform="translate(382 246.3) scale(0.88 1)">75.00</text>
<path d="M337.5 255.1L372.8 255.1" stroke="#1515e8" stroke-width="1" />
<path d="M419.3 255.1L447.6 255.1" stroke="#1515e8" stroke-width="1" />
<path d="M337.5 255.1L343.5 253.7L343.5 256.5z" fill="#1515e8" stroke="none"/>
<path d="M447.6 255.1L441.6 253.7L441.6 256.5z" fill="#1515e8" stroke="none"/>
<text x="0.1 6.1 12.5 18.1 24.2" y="0" font-size="10.6" fill="#e2e2e2" stroke="none" font-family="'Liberation Sans','Noto Sans CJK SC',sans-serif" transform="translate(374.8 258.8) scale(0.88 1)">79.00</text>
<path d="M335.4 267.6L381 267.6" stroke="#1515e8" stroke-width="1" />
<path d="M411.5 267.6L447.6 267.6" stroke="#1515e8" stroke-width="1" />
<path d="M335.4 267.6L341.4 266.2L341.4 269z" fill="#1515e8" stroke="none"/>
<path d="M447.6 267.6L441.6 266.2L441.6 269z" fill="#1515e8" stroke="none"/>
<text x="0.1 6.1 12.5 18.1 24.2" y="0" font-size="10.6" fill="#e2e2e2" stroke="none" font-family="'Liberation Sans','Noto Sans CJK SC',sans-serif" transform="translate(383 271.3) scale(0.88 1)">81.00</text>
<text x="-0.1 3.4 7.3 10.3 13.8" y="0" font-size="6.2" fill="#d6d6d6" stroke="none" font-family="'Liberation Sans','Noto Sans CJK SC',sans-serif" transform="translate(401.4 254.6) scale(0.9 1)">+0.02</text>
<text x="-0 3.9 6.9 10.3" y="0" font-size="6.2" fill="#d6d6d6" stroke="none" font-family="'Liberation Sans','Noto Sans CJK SC',sans-serif" transform="translate(404.5 260) scale(0.9 1)">0.00</text>
<path d="M447.6 230L447.6 323" stroke="#27b3b8" stroke-width="1.1" />
<path d="M433.500 323V316Q433.500 314.500 435 314.500Q436.500 314.500 436.500 316V321H438V316.500Q438 315 439.500 315Q441 315 441 316.500V321H442.500V316Q442.500 314.500 444 314.500Q446 314.500 446 316V323" stroke="#d8d22e" stroke-width="1.3" />
<rect x="308" y="186" width="1" height="1" fill="#888" stroke="none"/>
<path d="M595 85.400H600" stroke="#f2f2f2" stroke-width="1.5" />
<rect x="605.500" y="83" width="4" height="3.800" stroke="#f2f2f2" stroke-width="1.200" fill="#f2f2f2" fill-opacity=".35"/><path d="M607 82.500V81.500H611V85.500H610" stroke="#f2f2f2" stroke-width="1"/>
<path d="M616 82L620.500 86.500M620.500 82L616 86.500" stroke="#f2f2f2" stroke-width="1.4" />
</svg>
<!-- ================= WINDOW UI (page coords) ================= -->
<svg class="abs" style="left:0;top:0" width="921" height="528" viewBox="0 0 921 528" font-family="'Liberation Sans','Noto Sans CJK SC',sans-serif">
  <!-- menubar text -->
  <g font-size="7" fill="#f4f5f7">
    <text x="40" y="29" textLength="19.500" lengthAdjust="spacingAndGlyphs">文件(F)</text>
    <text x="72" y="29" textLength="20.500" lengthAdjust="spacingAndGlyphs">编辑(E)</text>
    <text x="104" y="29" textLength="21.500" lengthAdjust="spacingAndGlyphs">视图(V)</text>
    <text x="136" y="29" textLength="19" lengthAdjust="spacingAndGlyphs">插入(I)</text>
    <text x="165.700" y="29" textLength="23" lengthAdjust="spacingAndGlyphs">格式(O)</text>
    <text x="199.500" y="29" textLength="21" lengthAdjust="spacingAndGlyphs">工具(T)</text>
    <text x="231" y="29" textLength="22" lengthAdjust="spacingAndGlyphs">绘图(D)</text>
    <text x="264.500" y="29" textLength="22.500" lengthAdjust="spacingAndGlyphs">标注(N)</text>
    <text x="297.500" y="29" textLength="23.500" lengthAdjust="spacingAndGlyphs">修改(M)</text>
    <text x="333.700" y="29" textLength="33.800" lengthAdjust="spacingAndGlyphs">扩展工具(X)</text>
    <text x="380.700" y="29" textLength="23.800" lengthAdjust="spacingAndGlyphs">窗口(W)</text>
    <text x="415.700" y="29" textLength="21.800" lengthAdjust="spacingAndGlyphs">帮助(H)</text>
    <text x="448" y="29" textLength="15.700" lengthAdjust="spacingAndGlyphs">APP+</text>
  </g>
  <!-- tab bar -->
  <rect x="50.300" y="62.300" width="9.700" height="14" fill="#3d4653"/>
  <rect x="61.500" y="62.300" width="4.500" height="14" fill="#3d4653"/>
  <path d="M61.700 67.500h4.200l-2.100 3.400z" fill="#f4f5f7"/>
  <path d="M66.800 76.500L72.500 64.500Q72.800 64 73.500 64H163.500Q164.300 64 164.600 64.700L169.500 76.500z" fill="#4f6581"/>
  <path d="M166.800 70L170 76.500H183L178.200 66.500Q177.800 65.800 177 65.800H165z" fill="#3f4b5b"/>
  <rect x="73.800" y="66" width="7.600" height="8" rx="1.600" fill="#3f95f0"/><rect x="75.300" y="66.300" width="4.600" height="2.500" fill="#eaf3ff"/><rect x="74.600" y="70.200" width="6" height="1.400" fill="#dcecff"/><rect x="75.300" y="72.300" width="4.600" height="1" fill="#dcecff"/>
  <text x="83.300" y="72" font-size="6.500" font-weight="bold" fill="#f1f3f6" font-family="'Liberation Mono',monospace" textLength="45" lengthAdjust="spacingAndGlyphs">Drawing2.dwg</text>
  <path d="M155.700 67.500L160.300 72.300M160.300 67.500L155.700 72.300" stroke="#f5f6f8" stroke-width="1.300"/>
  <rect x="170.300" y="67.500" width="6" height="5.500" rx=".8" fill="#eef2f7"/><path d="M173.300 68.800v3M171.800 70.300h3" stroke="#3f95f0" stroke-width="1"/>
  <rect x="611" y="62.300" width="15.300" height="14" fill="#414c5b"/>
  <path d="M616.800 65L613.300 69.300L616.800 73.600zM620.500 65L624 69.300L620.500 73.600z" fill="none" stroke="#6f7c8c" stroke-width=".9"/>
  <!-- left toolbar -->
  <path d="M35 62.800H48.500M35 65.100H48.500" stroke="#8591a0" stroke-width="1"/>
  <g fill="none" stroke="#e6e9ee" stroke-width="1.100">
    <path d="M36.700 68.500L45.200 77" stroke="#9fd4ff"/><path d="M36.700 80.500L45.200 88.400" stroke="#8ec5f5" stroke-width=".9"/>
    <g transform="translate(40.0 96.3) scale(.84) translate(-40.5 -96.3)"><path d="M44.500 92.800H40.500A3.500 3.500 0 0 0 40.500 99.800H44.500" stroke="#e6e9ee"/><path d="M42.500 91.500l2.500 1.300-2.500 1.300" stroke="#5ab4f8" stroke-width=".9"/></g>
    <g transform="translate(40.5 108.3) scale(.84) translate(-41 -108.3)"><path d="M41 104L45.300 107.200L43.700 112.300H38.300L36.700 107.200z"/></g>
    <g transform="translate(40.7 119.7) scale(.84) translate(-41.2 -119.7)"><rect x="37.500" y="116.200" width="7.500" height="7"/><path d="M36.500 115.200h2" stroke="#5ab4f8"/></g>
    <g transform="translate(40.5 131) scale(.84) translate(-41 -131)"><path d="M37 135.500A8.500 8.500 0 0 1 45.500 127" stroke="#5ab4f8" stroke-width="1.500"/><path d="M43 135.500l2.500-2.500v2.500z" fill="#e6e9ee" stroke="none"/></g>
    <g transform="translate(40.5 142.8) scale(.84) translate(-41 -142.8)"><circle cx="41" cy="142.800" r="4"/><circle cx="41" cy="142.800" r="1" fill="#5ab4f8" stroke="none"/></g>
    <g transform="translate(41.0 155) scale(.84) translate(-41.5 -155)"><path d="M38 157.500H44.500A2.300 2.300 0 0 0 44.500 153A3.200 3.200 0 0 0 38.500 152.500A2.500 2.500 0 0 0 38 157.500z"/></g>
    <g transform="translate(40.5 166.6) scale(.84) translate(-41 -166.6)"><path d="M44.500 163.500C41 161.500 37 163 38 165.500S45 167 44 169.500S39 171 37.500 169.500"/></g>
    <g transform="translate(40.5 178) scale(.84) translate(-41 -178)"><ellipse cx="41" cy="178" rx="4.300" ry="3.300"/></g>
    <g transform="translate(40.5 190) scale(.84) translate(-41 -190)"><path d="M44.500 187.500A4.300 3.600 0 1 0 45 192"/><path d="M43 186l2 1.500-2 1.500" stroke-width=".8"/></g>
    <g transform="translate(40.5 201.8) scale(.84) translate(-41 -201.8)"><rect x="38" y="197.500" width="6.500" height="7.500"/><path d="M36.500 203h3M38 201.500v3" stroke="#5ab4f8"/><rect x="42.500" y="203" width="3" height="3" fill="#e6e9ee" stroke="none"/></g>
    <g transform="translate(40.5 213.3) scale(.84) translate(-41 -213.3)"><rect x="37.500" y="209.500" width="6.500" height="7.500" rx="1"/><circle cx="44.500" cy="216.500" r="1.400" fill="#4b5665"/></g>
    <g transform="translate(40.5 225.5) scale(.84) translate(-41 -225.5)"><path d="M38 222.500h1M43.500 222.500h1M41 225.500h1M38 228.500h1M43.500 228.500h1" stroke="#42a5f5" stroke-width="1.400"/></g>
    <g transform="translate(40.5 237.6) scale(.84) translate(-41 -237.6)"><rect x="37.500" y="234" width="7" height="7" fill="#3a6ea8" stroke="#cfd6df"/></g>
    <g transform="translate(40.5 249) scale(.84) translate(-41 -249)"><rect x="37" y="245" width="8" height="8" fill="#2f6fb8" stroke="#5ab4f8"/><circle cx="41" cy="249" r="2.300" stroke="#bfe0ff" stroke-width=".9"/></g>
    <g transform="translate(40.7 261.2) scale(.84) translate(-41.2 -261.2)"><rect x="37" y="258" width="8.500" height="6.500" fill="#e9edf2" stroke="none"/><path d="M37 260.300h8.500M37 262.400h8.500M39.800 258v6.500M42.600 258v6.500" stroke="#4b5665" stroke-width=".6"/><rect x="37" y="258" width="8.500" height="1.600" fill="#5cc06c" stroke="none"/></g>
    <g transform="translate(40.7 272) scale(.84) translate(-41.2 -272)"><rect x="37.500" y="268.500" width="7.500" height="7" fill="#c9b27a" stroke="#e6e9ee" stroke-width=".9"/><path d="M39 271h3" stroke="#4b5665" stroke-width=".8"/></g>
  </g>
  <!-- right strip -->
  <path d="M628 63.200H642.500M628 65.800H642.500" stroke="#8c98a7" stroke-width="1.200"/>
  <g fill="none" stroke="#e6e9ee" stroke-width="1" transform="translate(-1.100 0)">
    <g transform="translate(-1.800 -1.800)"><path d="M632.500 76.500L638.500 70.500L641 73L635 79z" fill="#eef2f7" stroke="none"/><path d="M637 72L638.500 70.500L641 73L639.500 74.500z" fill="#58b2f8" stroke="none"/></g>
    <g transform="translate(635.600 84.9) scale(.86) translate(-635.5 -84.2)"><rect x="631.500" y="80" width="5.500" height="6.500" stroke="#cfd6df"/><rect x="633.500" y="82" width="6" height="6.500" rx="1" stroke="#58b2f8" fill="#434d5a"/><circle cx="636.500" cy="85.300" r=".9" fill="#f5b841" stroke="none"/></g>
    <g transform="translate(635.600 97) scale(.86) translate(-635.6 -96.5)"><path d="M635 92.500V100.500H631.500z" fill="#cfd5dc" stroke="none"/><path d="M636.200 92.500V100.500H639.700z" fill="#f1b94a" stroke="none"/></g>
    <g transform="translate(635.600 107.7) scale(.86) translate(-635.7 -108.8)"><path d="M632 110.500H639M633 108.500A3 3 0 0 1 639 108.500" stroke="#f1e3c0"/><path d="M631.500 112H640" stroke="#f5b841"/></g>
    <g transform="translate(635.600 119.8) scale(.86) translate(-635.6 -119.6)"><rect x="631.500" y="115.500" width="3.400" height="3.400" fill="#f5c043" stroke="none"/><rect x="636.300" y="115.500" width="3.400" height="3.400" fill="#f5c043" stroke="none"/><rect x="631.500" y="120.300" width="3.400" height="3.400" fill="#f5c043" stroke="none"/><rect x="636.300" y="120.300" width="3.400" height="3.400" fill="#eef2f7" stroke="none"/></g>
    <g transform="translate(635.600 131.2) scale(.86) translate(-635.5 -131.5)"><path d="M635.500 127V136M631 131.500H640M634 128.500L635.500 127L637 128.500M634 134.500L635.500 136L637 134.500M632.500 130L631 131.500L632.500 133M638.500 130L640 131.500L638.500 133" stroke-width=".9"/></g>
    <g transform="translate(635.600 143.8) scale(.86) translate(-635.7 -142.5)"><path d="M638.500 140.500A4 4 0 1 1 633 140"/><path d="M633.500 138l-.8 2.300 2.300.3" stroke-width=".9"/></g>
    <g transform="translate(635.600 155.3) scale(.86) translate(-635.5 -155.5)"><rect x="631.500" y="151.500" width="8" height="8"/><path d="M635 155h3.500v3.500" stroke="#f5b841" stroke-width=".9"/><path d="M635 158.500l3.500-3.500" stroke-width=".7"/></g>
    <g transform="translate(635.600 166.9) scale(.86) translate(-635.5 -167)"><rect x="631.500" y="163" width="8" height="8"/><path d="M635.500 169V165M634 166.500L635.500 165L637 166.500" stroke="#f5b841"/></g>
    <g transform="translate(635.600 178.2) scale(.86) translate(-635.5 -178.5)"><path d="M636.500 174.500L634.500 182.500M632.500 179H638.500" stroke="#e8b04a" stroke-width=".9"/></g>
    <g transform="translate(635.600 189.7) scale(.86) translate(-635.5 -190)"><path d="M638.500 186L636.500 194M632.500 190H637.500" stroke="#e8b04a" stroke-width=".9"/></g>
  </g>
  <!-- props panel -->
  <g>
    <text x="651" y="73.200" font-size="8" font-weight="bold" fill="#f4f5f7" textLength="15.500" lengthAdjust="spacingAndGlyphs">特性</text>
    <path d="M753 67.700L757.500 72.200M757.500 67.700L753 72.200" stroke="#f4f5f7" stroke-width="1.400"/>
    <text x="651.500" y="90" font-size="7" fill="#d9dde3" textLength="20.500" lengthAdjust="spacingAndGlyphs">无选择</text>
    <rect x="650" y="92" width="69.500" height="1" fill="#525d6b"/>
    <path d="M713 85h5l-2.500 3.200z" fill="#eceef2"/>
    <g fill="none" stroke="#566170" stroke-width="1"><rect x="722.500" y="80.500" width="9.500" height="11"/><rect x="735.500" y="80.500" width="9.500" height="11"/><rect x="748.500" y="80.500" width="9.500" height="11"/></g>
    <g fill="none" stroke="#e9ecf0" stroke-width=".9"><rect x="724.500" y="82.500" width="3.800" height="4.500"/><rect x="726.500" y="84.800" width="3.800" height="4.500" fill="#3e4855"/></g>
    <circle cx="739.500" cy="87.500" r="2.300" fill="none" stroke="#e9ecf0" stroke-width=".9"/><rect x="740.500" y="82" width="4" height="4.500" fill="#4aa8f8"/><path d="M741.500 89.500l1.500 1.500" stroke="#e9ecf0" stroke-width=".9"/>
    <path d="M750.500 83v5l1.500-1.300 1 2.300 1-.5-1-2.200h2z" fill="none" stroke="#e9ecf0" stroke-width=".8"/><path d="M756.500 83l-2 3.500h1.500l-1 3 2.500-4h-1.500z" fill="#f5c043"/>
    <!-- scrollbar -->
    <rect x="751.200" y="94" width="7.300" height="103" fill="#4b5563"/>
    <path d="M753.300 99.500L754.900 97.700L756.500 99.500" fill="none" stroke="#7e8997" stroke-width=".9"/>
    <rect x="751.200" y="103.500" width="7.300" height="93.500" fill="#566170"/>
    <text x="651" y="119.800" font-size="7" font-weight="bold" fill="#f0f2f5" textLength="13.500" lengthAdjust="spacingAndGlyphs">基本</text>
    <path d="M740.800 113.500h5l-2.500 3z" fill="#eceef2"/>
    <rect x="650" y="122" width="96" height="1.300" fill="#9da8b5"/>
    <g fill="#4f5a68"><rect x="650" y="136.300" width="96" height="1"/><rect x="650" y="150.800" width="96" height="1"/><rect x="650" y="165.300" width="96" height="1"/><rect x="650" y="180" width="96" height="1"/><rect x="650" y="194.500" width="96" height="1"/></g>
    <g font-size="7" fill="#cfd4db">
      <text x="651" y="131.800" textLength="13.500" lengthAdjust="spacingAndGlyphs">颜色</text>
      <text x="651" y="146.300" textLength="13.500" lengthAdjust="spacingAndGlyphs">图层</text>
      <text x="651" y="160.800" textLength="13.500" lengthAdjust="spacingAndGlyphs">线型</text>
      <text x="651" y="175.300" textLength="27" lengthAdjust="spacingAndGlyphs">线型比例</text>
      <text x="651" y="190" textLength="13.500" lengthAdjust="spacingAndGlyphs">线宽</text>
    </g>
    <g font-size="7" fill="#e4e7ec">
      <rect x="703" y="126.800" width="4.600" height="4.600" rx=".8" fill="#fff"/><text x="710" y="131.800" textLength="13.500" lengthAdjust="spacingAndGlyphs">随层</text>
      <text x="700" y="146.300" font-size="6.500">0</text>
      <path d="M700 158.300H724" stroke="#d5d9df" stroke-width=".8"/><text x="726" y="160.800" textLength="13.500" lengthAdjust="spacingAndGlyphs">随层</text>
      <text x="700" y="175.300" font-size="6.500">1</text>
      <path d="M700 187.500H708" stroke="#d5d9df" stroke-width=".8"/><text x="711" y="190" textLength="13.500" lengthAdjust="spacingAndGlyphs">随层</text>
    </g>
  </g>
  <!-- layout tabs -->
  
  <g>
    <g fill="#4a5564"><rect x="51.500" y="324" width="6.500" height="6.500"/><rect x="59" y="324" width="6.500" height="6.500"/><rect x="66.500" y="324" width="6.500" height="6.500"/><rect x="74" y="324" width="6.500" height="6.500"/></g>
    <g fill="#9aa5b3"><path d="M56.500 325.300L53.800 327.300L56.500 329.300zM53 325.300h.9v4H53z"/><path d="M63.800 325.300L61 327.300L63.800 329.300z"/><path d="M68.500 325.300L71.300 327.300L68.500 329.300z"/><path d="M75.700 325.300L78.500 327.300L75.700 329.300zM78.600 325.300h.9v4h-.9z"/></g>
    <path d="M84.500 323.500H107L110.500 331H88z" fill="#5a6d85"/>
    <path d="M109 323.500H131L134.500 331H112.500z" fill="#3b424d"/>
    <path d="M133 323.500H155.500L159 331H136.500z" fill="#3b424d"/>
    <text x="89.500" y="330" font-size="6.800" font-weight="bold" fill="#fff" textLength="14.500" lengthAdjust="spacingAndGlyphs">模型</text>
    <text x="113.500" y="330" font-size="6.800" fill="#e2e5ea" textLength="16" lengthAdjust="spacingAndGlyphs">布局1</text>
    <text x="137.500" y="330" font-size="6.800" fill="#e2e5ea" textLength="16.500" lengthAdjust="spacingAndGlyphs">布局2</text>
  </g>
  <!-- command area -->
  <rect x="35" y="331.200" width="592" height="1" fill="#43484f"/>
  <rect x="35" y="332" width="11.700" height="52.500" fill="#404956"/>
  <path d="M38 334.800L42 339M42 334.800L38 339" stroke="#6d7886" stroke-width="1"/>
  <rect x="46" y="372" width="581" height="1" fill="#43484f"/>
  <g font-size="8.300" fill="#c4c8ce" font-family="'Liberation Mono','Noto Serif CJK SC',monospace">
    <text x="47.500" y="340" textLength="20.500" lengthAdjust="spacingAndGlyphs">命令:</text>
    <text x="47.500" y="349.600" textLength="20.500" lengthAdjust="spacingAndGlyphs">命令:</text>
    <text x="47.500" y="359.600" textLength="68" lengthAdjust="spacingAndGlyphs">命令: _pasteclip</text>
    <text x="47.500" y="368.700" textLength="45.500" lengthAdjust="spacingAndGlyphs">指定插入点:</text>
    <text x="47.500" y="382.700" textLength="20.500" lengthAdjust="spacingAndGlyphs">命令:</text>
  </g>
</svg>
<!-- ================= SELECTION FRAME ================= -->
<svg class="abs" style="left:0;top:0" width="921" height="528" viewBox="0 0 921 528">
  <path d="M35.500 400.400H577.500V500.400H894.500" fill="none" stroke="#2a2a2a" stroke-width="1"/>
  <rect x="33" y="398" width="4.800" height="4.800" fill="#2a2a2a"/>
  <rect x="575.500" y="398.300" width="4" height="4.200" fill="#fff" stroke="#2a2a2a" stroke-width="1"/>
  <rect x="575.500" y="498.300" width="4" height="4.200" fill="#fff" stroke="#2a2a2a" stroke-width="1"/>
  <rect x="892.500" y="498.300" width="4" height="4.200" fill="#fff" stroke="#2a2a2a" stroke-width="1"/>
</svg>
<!-- ================= DIALOG ================= -->
<div id="dlg">
  <div class="tt"></div>
  <svg class="abs" style="left:14px;top:8.500px" width="11" height="11" viewBox="0 0 12 12"><rect x="0" y="0" width="11.500" height="11.500" fill="#10298c"/><path d="M2.500 8.500L4.500 3l2 4.500 1.500-2 1.500 1.500" fill="none" stroke="#fff" stroke-width="1.300"/><path d="M2 9.500h3" stroke="#59b2ff" stroke-width="1"/></svg>
  <div class="abs" style="left:31px;top:5px;color:#fff;font-size:12px;line-height:18px;white-space:nowrap;letter-spacing:0">注释对象比例</div>
  <svg class="abs" style="left:289px;top:10px" width="9" height="9" viewBox="0 0 9 9"><path d="M1.500 1.500L7.500 7.500M7.500 1.500L1.500 7.500" stroke="#fff" stroke-width="1.800"/></svg>
  <div class="pn"></div>
  <!-- group box -->
  <div class="abs" style="left:15px;top:58.300px;width:269px;height:170px;border:1px solid #d3dde3;border-radius:3px;"></div>
  <div class="dt" style="left:20px;top:52.300px;padding:0 2px;background:#f0f0f0;font-size:11px;letter-spacing:-.4px">对象比例列表</div>
  <!-- list -->
  <div class="abs" style="left:24px;top:68px;width:175px;height:89px;background:#fff;border:1px solid #828790;"></div>
  <div class="abs" style="left:26px;top:70px;width:173px;height:11px;background:#3399ff;"></div>
  <div class="dt" style="left:27px;top:69.600px;color:#fff;font-family:'Liberation Mono','Noto Sans Mono CJK SC',monospace;font-size:10.500px;letter-spacing:-.9px">1:100</div>
  <div class="dt" style="left:27px;top:80.600px;font-family:'Liberation Mono','Noto Sans Mono CJK SC',monospace;font-size:10.500px;letter-spacing:-.9px">1:50</div>
  <!-- side buttons -->
  <div class="btn" style="left:209px;top:69px;width:66px;">添加(A)...</div>
  <div class="btn" style="left:209px;top:97px;width:66px;">删除(D)</div>
  <!-- info -->
  <div class="dt" style="left:24.500px;top:172.800px;font-size:11px;letter-spacing:-.2px;word-spacing:1.600px">1 图纸单位 = 100 图形单位</div>
  <div class="abs" style="left:24px;top:192.700px;width:9px;height:9px;border-radius:50%;border:1px solid #7d8790;background:radial-gradient(circle at 50% 50%,#1c2a3a 0,#1c2a3a 2.200px,#e9eef2 2.800px,#fdfdfd 100%);"></div>
  <div class="dt" style="left:38px;top:191.500px;font-size:11px;letter-spacing:-.45px">列出选定对象的所有比例<span style="font-family:'Liberation Mono',monospace;letter-spacing:-1.600px;margin-left:2px">(L)</span></div>
  <div class="abs" style="left:24px;top:211.700px;width:9px;height:9px;border-radius:50%;border:1px solid #8c959d;background:radial-gradient(circle at 40% 35%,#fff 0,#e2e6ea 100%);"></div>
  <div class="dt" style="left:38px;top:210.500px;font-size:11px;letter-spacing:-.45px">仅列出所有选定对象的公共比例<span style="font-family:'Liberation Mono',monospace;letter-spacing:-1.600px;margin-left:2px">(O)</span></div>
  <!-- bottom buttons -->
  <div class="btn" style="left:45px;top:237px;width:54px;border:1px solid #3c3c3c;box-shadow:inset 0 0 0 1px #a9c9e6;">确定</div>
  <div class="btn" style="left:122px;top:237px;width:55px;">取消</div>
  <div class="btn" style="left:200px;top:237px;width:55px;">帮助(H)</div>
</div>
<!-- ================= BLUE POPUP ================= -->
<svg class="abs" style="left:730px;top:110px" width="175" height="90" viewBox="730 110 175 90" font-family="'Liberation Sans','Noto Sans CJK SC',sans-serif">
  <defs>
    <linearGradient id="pg" x1="0" y1="0" x2="1" y2="0.400"><stop offset="0" stop-color="#2e8ae6"/><stop offset=".55" stop-color="#2b7ee2"/><stop offset="1" stop-color="#2a6cd9"/></linearGradient>
    <linearGradient id="pf" x1="0" y1="0" x2="1" y2="0"><stop offset="0" stop-color="#2a7ade"/><stop offset="1" stop-color="#2758cf"/></linearGradient>
    <clipPath id="pc"><path d="M740 115H891L895 119V177L891 181H740L736 177V119z"/></clipPath>
  </defs>
  <path d="M740 115H891L895 119V177L891 181H740L736 177V119z" fill="url(#pg)"/>
  <rect x="736" y="115" width="28.500" height="66" fill="#1f5fb0" opacity=".28" clip-path="url(#pc)"/>
  <rect x="736" y="166" width="159" height="15" fill="url(#pf)" clip-path="url(#pc)"/>
  <path d="M849.500 180.500H865.500L857.500 190.500z" fill="#2a6fdb"/>
  <!-- big icon -->
  <g fill="#62e3f2">
    <path d="M784.200 123.500L787.800 131.500L784.200 135L780.600 131.500z"/>
    <path d="M780 132.500L783.600 136L781.500 141H775.500z"/>
    <path d="M788.400 132.500L784.800 136L786.900 141H792.900z"/>
    <path d="M774.700 125.700h5.600v1.300h-5.600zM776.850 123.500h1.300v5.600h-1.300z" fill="#43e6c0"/>
    <path d="M783 155h3.600l-1.800 2z"/>
  </g>
  <!-- small icons -->
  <g fill="#62e3f2">
    <path d="M816 122.500L818 127L816 129L814 127zM813.600 127.600L815.600 129.600L814.500 132.500H811.200zM818.400 127.600L816.400 129.600L817.500 132.500H820.800z"/>
    <rect x="817.500" y="129" width="4.500" height="3.500" fill="none" stroke="#62e3f2" stroke-width=".8"/>
    <path d="M816 136.500L818 141L816 143L814 141zM813.600 141.600L815.600 143.600L814.500 146.500H811.200zM818.400 141.600L816.400 143.600L817.500 146.500H820.800z"/>
    <path d="M817.500 138.500h4M817.500 140.300h4M817.500 142h4" stroke="#62e3f2" stroke-width=".7"/>
  </g>
  <g fill="#8df0fb" font-size="7.400">
    <text x="762" y="151" textLength="44.500" lengthAdjust="spacingAndGlyphs">添加当前比例</text>
    <text x="823.400" y="130.400" textLength="29.600" lengthAdjust="spacingAndGlyphs">比例列表</text>
    <text x="823.400" y="144.300" textLength="47.600" lengthAdjust="spacingAndGlyphs">添加/删除比例</text>
    <text x="797.300" y="175" textLength="37" lengthAdjust="spacingAndGlyphs" fill="#86ebf8">注释性比例</text>
  </g>
</svg>
<!-- ================= BLUE STATUS ================= -->
<svg class="abs" style="left:730px;top:466px" width="170" height="32" viewBox="730 466 170 32" font-family="'Liberation Sans','Noto Sans CJK SC',sans-serif">
  <defs><linearGradient id="sg" x1="0" y1="0" x2="0" y2="1"><stop offset="0" stop-color="#2d8ae9"/><stop offset=".55" stop-color="#2c87e8"/><stop offset=".6" stop-color="#2a80e5"/><stop offset="1" stop-color="#2a80e5"/></linearGradient></defs>
  <path d="M738.800 471H891L894.700 474.700V491L891 494.700H738.800L735 491V474.700z" fill="url(#sg)"/>
  <path d="M0 -6.800L2.500 -.400L.300 1.800L-.300 1.800L-2.500 -.400zM-.700 2.300L-2.900 .100L-7 6.400H-2.600zM.700 2.300L2.900 .100L7 6.400H2.600z" transform="translate(749.800 482.900)" fill="#6fe6f6"/>
  <text x="759.800" y="484.200" font-size="9.500" fill="#55a9ec" textLength="24.700" lengthAdjust="spacingAndGlyphs">1:100</text>
  <path d="M800.400 479.700h6.200l-3.100 3.900z" fill="#1f6ed9"/>
  <rect x="812" y="475.800" width="1" height="15.200" fill="#58a5ea"/>
  <path d="M0 -6.800L2.500 -.400L.300 1.800L-.300 1.800L-2.500 -.400zM-.700 2.300L-2.900 .100L-7 6.400H-2.600zM.700 2.300L2.900 .100L7 6.400H2.600z" transform="translate(822.500 482.900)" fill="#6fe6f6"/>
  <circle cx="828" cy="486" r="1.700" fill="#b9f3e6"/><rect x="827.400" y="487" width="1.200" height="2.600" fill="#b9f3e6"/>
  <path d="M0 -6.800L2.500 -.400L.300 1.800L-.300 1.800L-2.500 -.400zM-.700 2.300L-2.900 .100L-7 6.400H-2.600zM.700 2.300L2.900 .100L7 6.400H2.600z" transform="translate(841.500 482.900)" fill="#6fe6f6"/>
  <path d="M836.500 477l3 2.500M838.500 475.500l3 3" stroke="#9af0fa" stroke-width="1"/>
  <g transform="translate(859.200 482.500)"><circle r="3.300" fill="none" stroke="#6fe6f6" stroke-width="1.700"/><path d="M0-6V6M-6 0H6M-4.200-4.200L4.200 4.200M4.200-4.200L-4.200 4.200" stroke="#6fe6f6" stroke-width="1.500"/><circle r="2" fill="#2b84e6"/></g>
  <g fill="none" stroke="#7debf8" stroke-width="1"><path d="M872.700 480.500v-4.200h4.200M884 480.500v-4.200h-4.200M872.700 485v4.200h4.200M884 485v4.200h-4.200M873 476.600l3.600 3.600M883.700 476.600l-3.600 3.600M873 488.900l3.600-3.600M883.700 488.900l-3.600-3.600"/></g>
</svg>
</body>
</html>
